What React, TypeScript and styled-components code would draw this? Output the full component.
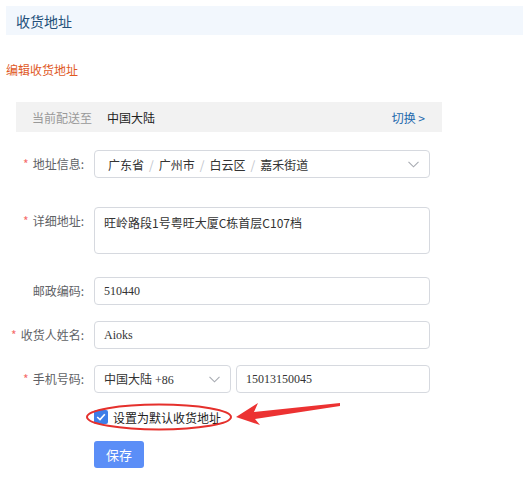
import React from "react";
import styled, { createGlobalStyle } from "styled-components";

const Global = createGlobalStyle`
  html, body { margin: 0; padding: 0; background: #fff; }
  body { font-family: "Noto Sans CJK SC", "Noto Sans", sans-serif; }
  * { box-sizing: border-box; }
`;

const Page = styled.div`
  padding: 6px 0 0 6px;
  width: 523px;
  height: 477px;
  overflow: hidden;
`;

const Header = styled.div`
  height: 29px;
  background: #f2f7fd;
  padding-left: 10px;
  display: flex;
  align-items: center;
  font-size: 14px;
  color: #23507a;
`;

const EditTitle = styled.div`
  margin-top: 27px;
  font-size: 12px;
  line-height: 16px;
  color: #e0591f;
`;

const ShipBar = styled.div`
  margin: 24px 0 0 10px;
  width: 426px;
  height: 30px;
  background: #f2f2f2;
  display: flex;
  align-items: center;
  padding: 0 17px 0 16px;
  font-size: 12px;
`;

const ShipLabel = styled.span`
  color: #999;
`;

const ShipValue = styled.span`
  color: #222;
  margin-left: 15px;
`;

const SwitchLink = styled.span`
  margin-left: auto;
  color: #2369ad;
`;

const Form = styled.div`
  margin-top: 18px;
`;

const Row = styled.div<{ $mb: number }>`
  display: flex;
  align-items: flex-start;
  margin-bottom: ${(p) => p.$mb}px;
`;

const Label = styled.div`
  width: 78px;
  margin-right: 10px;
  text-align: right;
  line-height: 28px;
  font-size: 12px;
  color: #606266;
  white-space: nowrap;
`;

const Star = styled.span`
  color: #f56c6c;
  margin-right: 4px;
`;

const Box = styled.div<{ $w: number; $h?: number; $serif?: boolean }>`
  width: ${(p) => p.$w}px;
  height: ${(p) => p.$h ?? 28}px;
  border: 1px solid #d6d9df;
  border-radius: 4px;
  padding: 0 9px;
  display: flex;
  align-items: center;
  font-size: 12px;
  color: #333;
  font-family: ${(p) =>
    p.$serif
      ? `"Liberation Serif", "Noto Sans CJK SC", serif`
      : `"Noto Sans CJK SC", "Noto Sans", sans-serif`};
`;

const TextArea = styled(Box)`
  align-items: flex-start;
  padding: 6px 9px;
  line-height: 18px;
`;

const Sep = styled.span`
  color: #c0c4cc;
  margin: 0 5px;
`;

const Chevron = styled.svg`
  margin-left: auto;
  flex: none;
`;

const Pair = styled.div`
  display: flex;
  gap: 5px;
`;

const CheckRow = styled.div`
  position: relative;
  margin: 17px 0 0 88px;
  height: 14px;
  display: flex;
  align-items: center;
  font-size: 12px;
  color: #222;
`;

const CheckBox = styled.span`
  width: 14px;
  height: 14px;
  border-radius: 2px;
  background: #3e7ee8;
  display: inline-flex;
  align-items: center;
  justify-content: center;
  margin-right: 5px;
`;

const Annotation = styled.svg`
  position: absolute;
  left: -8px;
  top: -8px;
  overflow: visible;
  pointer-events: none;
`;

const SaveButton = styled.button`
  margin: 17px 0 0 88px;
  width: 50px;
  height: 27px;
  border: none;
  border-radius: 3px;
  background: #5b8ef7;
  color: #fff;
  font-size: 13px;
  font-family: "Noto Sans CJK SC", sans-serif;
  padding: 0;
`;

const Down = () => (
  <Chevron width="11" height="7" viewBox="0 0 11 7">
    <polyline points="0.5,0.8 5.5,5.8 10.5,0.8" fill="none" stroke="#a8abb2" strokeWidth="1.1" />
  </Chevron>
);

export default function App() {
  return (
    <Page>
      <Global />
      <Header>收货地址</Header>
      <EditTitle>编辑收货地址</EditTitle>
      <ShipBar>
        <ShipLabel>当前配送至</ShipLabel>
        <ShipValue>中国大陆</ShipValue>
        <SwitchLink>切换 &gt;</SwitchLink>
      </ShipBar>
      <Form>
        <Row $mb={29}>
          <Label>
            <Star>*</Star>地址信息:
          </Label>
          <Box $w={336} style={{ paddingLeft: 13, paddingRight: 10 }}>
            广东省<Sep>/</Sep>广州市<Sep>/</Sep>白云区<Sep>/</Sep>嘉禾街道
            <Down />
          </Box>
        </Row>
        <Row $mb={23}>
          <Label>
            <Star>*</Star>详细地址:
          </Label>
          <TextArea $w={336} $h={47}>
            旺岭路段1号粤旺大厦C栋首层C107档
          </TextArea>
        </Row>
        <Row $mb={16}>
          <Label>邮政编码:</Label>
          <Box $w={336} $serif>510440</Box>
        </Row>
        <Row $mb={16}>
          <Label>
            <Star>*</Star>收货人姓名:
          </Label>
          <Box $w={336} $serif>Aioks</Box>
        </Row>
        <Row $mb={0}>
          <Label>
            <Star>*</Star>手机号码:
          </Label>
          <Pair>
            <Box $w={137} $serif style={{ paddingRight: 10 }}>
              中国大陆 +86
              <Down />
            </Box>
            <Box $w={194} $serif>15013150045</Box>
          </Pair>
        </Row>
      </Form>
      <CheckRow>
        <CheckBox>
          <svg width="10" height="8" viewBox="0 0 10 8">
            <polyline points="1.2,4 4,6.6 8.8,1.2" fill="none" stroke="#fff" strokeWidth="1.6" />
          </svg>
        </CheckBox>
        设置为默认收货地址
        <Annotation width="260" height="30" viewBox="0 0 260 30">
          <ellipse cx="73" cy="15" rx="72" ry="12.5" fill="none" stroke="#e5302c" strokeWidth="2" />
          <polygon
            points="150,15 172,1 168,10 254,1 254,4 169,17 174,23"
            fill="#ec3232"
          />
        </Annotation>
      </CheckRow>
      <SaveButton>保存</SaveButton>
    </Page>
  );
}
